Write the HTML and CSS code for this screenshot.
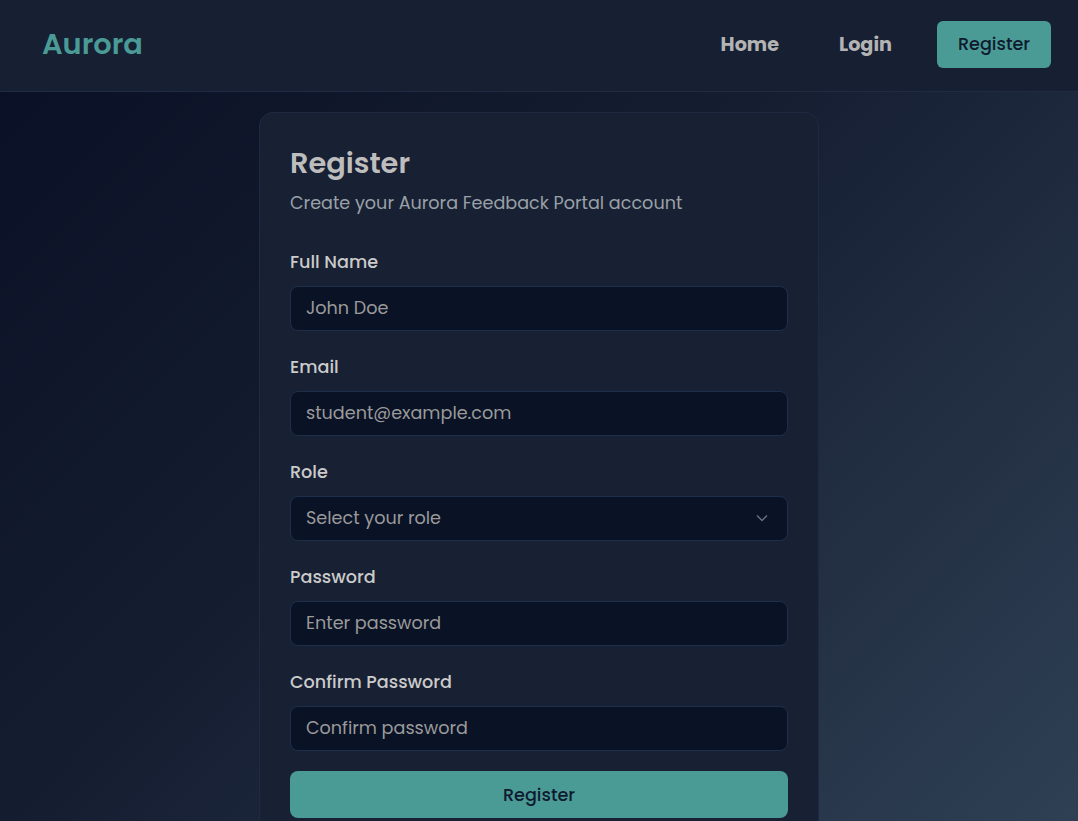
FILE: index.html
```html
<!DOCTYPE html>
<html lang="en">
<head>
<meta charset="utf-8">
<title>Register - Aurora</title>
<link rel="stylesheet" href="styles.css">
</head>
<body>
<header class="topbar">
  <a class="brand" href="#">Aurora</a>
  <nav class="nav">
    <a class="nav-link" href="#">Home</a>
    <a class="nav-link" href="#">Login</a>
    <a class="nav-btn" href="#">Register</a>
  </nav>
</header>
<main class="main">
  <section class="card">
    <h1 class="title">Register</h1>
    <p class="subtitle">Create your Aurora Feedback Portal account</p>
    <form class="form">
      <div class="field">
        <label class="label">Full Name</label>
        <input class="input" type="text" placeholder="John Doe">
      </div>
      <div class="field">
        <label class="label">Email</label>
        <input class="input" type="email" placeholder="student@example.com">
      </div>
      <div class="field">
        <label class="label">Role</label>
        <div class="select">
          <span class="select-text">Select your role</span>
          <svg class="chev" width="12" height="8" viewBox="0 0 12 8"><path d="M1 1.5 L6 6.5 L11 1.5" fill="none" stroke="currentColor" stroke-width="1.4"/></svg>
        </div>
      </div>
      <div class="field">
        <label class="label">Password</label>
        <input class="input" type="password" placeholder="Enter password">
      </div>
      <div class="field last">
        <label class="label">Confirm Password</label>
        <input class="input" type="password" placeholder="Confirm password">
      </div>
      <button class="submit" type="button">Register</button>
    </form>
  </section>
</main>
</body>
</html>
```

FILE: styles.css
```css
* { box-sizing: border-box; }
html, body { margin: 0; padding: 0; }
body {
  font-family: "Poppins", "Open Sans", "Noto Sans", sans-serif;
  background: linear-gradient(135deg, #091025 0%, #151d31 45%, #2f4054 100%);
  background-attachment: fixed;
  min-height: 100vh;
  color: #c4c4c4;
}
a { text-decoration: none; }
.topbar {
  height: 92px;
  display: flex;
  align-items: center;
  justify-content: space-between;
  padding: 0 27px 3px 42px;
  background: #171f33;
  border-bottom: 1px solid #1f2b42;
}
.brand {
  font-size: 28.8px;
  font-weight: 600;
  color: #4a9a96;
}
.nav { display: flex; align-items: center; }
.nav-link {
  font-size: 19.2px;
  font-weight: 700;
  color: #b3b3b3;
  margin-right: 60px;
}
.nav-link:nth-child(2) { margin-right: 45px; }
.nav-btn {
  display: flex;
  align-items: center;
  justify-content: center;
  width: 114px;
  height: 47px;
  border-radius: 6px;
  background: #4a9a96;
  color: #0f1a2e;
  font-size: 17.6px;
  font-weight: 500;
}
.main {
  display: flex;
  justify-content: center;
  padding-top: 20px;
}
.card {
  width: 560px;
  background: #182033;
  border: 1px solid #1e2a42;
  border-radius: 14px;
  padding: 31px 30px 32px 30px;
}
.title {
  margin: 0;
  font-size: 28.8px;
  line-height: 38px;
  font-weight: 600;
  color: #bdbdbd;
}
.subtitle {
  margin: 8px 0 33px;
  font-size: 17.6px;
  line-height: 26px;
  color: #9aa0a8;
}
.form { display: flex; flex-direction: column; }
.field { display: flex; flex-direction: column; margin-bottom: 23px; }
.field.last { margin-bottom: 20px; }
.label {
  font-size: 17.6px;
  line-height: 26px;
  font-weight: 500;
  color: #cbcbcb;
  margin-bottom: 11px;
}
.input, .select {
  height: 45px;
  width: 100%;
  background: #0a1226;
  border: 1px solid #1f2e4a;
  border-radius: 8px;
  padding: 0 15px 1px;
  font-family: inherit;
  font-size: 17.6px;
  color: #d0d0d0;
  outline: none;
}
.input::placeholder { color: #9a9a9a; }
.select {
  display: flex;
  align-items: center;
  justify-content: space-between;
}
.select-text { color: #9a9a9a; }
.chev { color: #6a7180; margin-right: 4px; }
.submit {
  height: 47px;
  width: 100%;
  border: none;
  border-radius: 8px;
  background: #4a9a96;
  color: #0f1a2e;
  font-family: inherit;
  font-size: 17.6px;
  font-weight: 500;
}
```
